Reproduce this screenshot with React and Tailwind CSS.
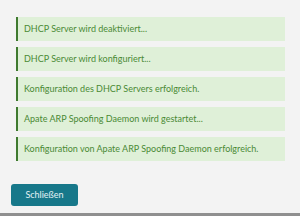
export default function App() {
  const msgs = [
    "DHCP Server wird deaktiviert...",
    "DHCP Server wird konfiguriert...",
    "Konfiguration des DHCP Servers erfolgreich.",
    "Apate ARP Spoofing Daemon wird gestartet...",
    "Konfiguration von Apate ARP Spoofing Daemon erfolgreich.",
  ];
  return (
    <div
      className="w-[300px] h-[216px] bg-[#f3f3f3] border-b-[3px] border-[#8f8f8f] flex flex-col overflow-hidden"
      style={{ fontFamily: "Lato, 'Open Sans', sans-serif" }}
    >
      <div className="pt-[17px] pl-[16px] pr-[15px] flex flex-col gap-[6px]">
        {msgs.map((m) => (
          <div
            key={m}
            className="h-[24px] bg-[#dff0d8] border-l-2 border-[#3f7a2f] flex items-center pl-[6px] text-[9px] text-[#4a8a35] whitespace-nowrap"
          >
            {m}
          </div>
        ))}
      </div>
      <div className="pl-[11px] mt-[23px]">
        <button className="w-[67px] h-[22px] bg-[#17788a] rounded-[3px] text-[#e6f3f5] text-[9px] flex items-center justify-center">
          Schließen
        </button>
      </div>
    </div>
  );
}
